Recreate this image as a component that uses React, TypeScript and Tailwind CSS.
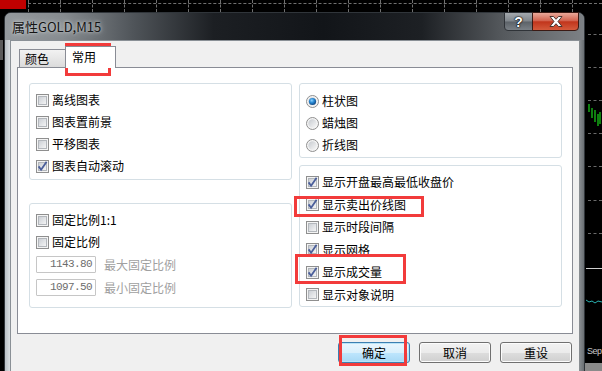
import React from 'react';

const Check = ({ on }: { on?: boolean }) => (
  <svg width="13" height="13" viewBox="0 0 13 13" className="shrink-0">
    <defs>
      <linearGradient id="cbg" x1="0" y1="0" x2="1" y2="1">
        <stop offset="0" stopColor="#c9cdd3" />
        <stop offset="1" stopColor="#f7f7f7" />
      </linearGradient>
    </defs>
    <rect x="0.5" y="0.5" width="12" height="12" fill="#f4f4f4" stroke="#8f8f8f" />
    <rect x="2.5" y="2.5" width="8" height="8" fill="url(#cbg)" stroke="#b3b7bc" />
    {on && <path d="M2.6 6.4 L5.1 9.8 L10.6 1.8" fill="none" stroke="#4a5e9a" strokeWidth="1.8" />}
  </svg>
);

const Radio = ({ on }: { on?: boolean }) => (
  <svg width="13" height="13" viewBox="0 0 13 13" className="shrink-0">
    <defs>
      <linearGradient id="rbg" x1="0" y1="0" x2="1" y2="1">
        <stop offset="0" stopColor="#c6cacf" />
        <stop offset="1" stopColor="#f8f8f8" />
      </linearGradient>
      <radialGradient id="rsel" cx="0.4" cy="0.35" r="0.7">
        <stop offset="0" stopColor="#8fd3ff" />
        <stop offset="0.45" stopColor="#2a8ad4" />
        <stop offset="1" stopColor="#0d3f7a" />
      </radialGradient>
    </defs>
    <circle cx="6.5" cy="6.5" r="6" fill="#f4f4f4" stroke="#8f8f8f" />
    <circle cx="6.5" cy="6.5" r="4.2" fill="url(#rbg)" />
    {on && <circle cx="6.5" cy="6.5" r="3.6" fill="url(#rsel)" />}
  </svg>
);

const Row = ({ label, on, radio, tall }: { label: string; on?: boolean; radio?: boolean; tall?: boolean }) => (
  <div className={tall ? 'flex items-center gap-[3px] h-[22.5px]' : 'flex items-center gap-[3px] h-[22px]'}>
    {radio ? <Radio on={on} /> : <Check on={on} />}
    <span className="text-[12px] leading-none text-black whitespace-nowrap">{label}</span>
  </div>
);

const Field = ({ value, label }: { value: string; label: string }) => (
  <div className="flex items-center h-[23px] gap-[8px]">
    <div className="w-[60px] h-[17px] border border-[#c6c6c6] rounded-[1px] bg-white flex items-center justify-end pr-[3px] text-[11px] tracking-[-0.6px] text-[#6d6d6d] [font-family:'Liberation_Mono',monospace]">
      {value}
    </div>
    <span className="text-[12px] leading-none text-[#a0a0a0] whitespace-nowrap">{label}</span>
  </div>
);

const Btn = ({ label, primary }: { label: string; primary?: boolean }) => (
  <div
    className={
      primary
        ? 'w-[72px] h-[21px] rounded-[3px] border border-[#3c7fb1] bg-[linear-gradient(180deg,#eaf6fd_0%,#d9f0fc_50%,#bee6fd_51%,#a7d9f5_100%)] flex items-center justify-center text-[12px] text-black shadow-[inset_0_0_0_1px_#b9e4f7]'
        : 'w-[72px] h-[21px] rounded-[3px] border border-[#707070] bg-[linear-gradient(180deg,#f2f2f2_0%,#ebebeb_50%,#dddddd_51%,#cfcfcf_100%)] flex items-center justify-center text-[12px] text-black shadow-[inset_0_0_0_1px_#fcfcfc]'
    }
  >
    {label}
  </div>
);

const RedBox = ({ cls }: { cls: string }) => <div className={'absolute border-[3px] border-[#f23b3b] ' + cls} />;

export default function App() {
  const ticks = Array.from({ length: 18 }, (_, i) => 28 + i * 32);
  const rightDashes = [34, 67, 100, 133, 166, 200, 233];

  return (
    <div className="relative w-[602px] h-[371px] overflow-hidden bg-black [font-family:'Noto_Sans_CJK_SC',sans-serif]">
      {/* chart behind the dialog */}
      <div className="absolute left-0 top-0 w-[26px] h-[9px] bg-[#c00000]" />
      <div className="absolute left-[28px] top-[3px] w-[574px] border-t border-dashed border-[#707070]" />
      {ticks.map((x) => (
        <div key={x} className="absolute top-0 h-[12px] border-l border-dashed border-[#707070]" style={{ left: x }} />
      ))}
      {rightDashes.map((y) => (
        <div key={y} className="absolute left-[588px] w-[14px] border-t border-dashed border-[#6a6a6a]" style={{ top: y }} />
      ))}
      <svg className="absolute left-[588px] top-[102px]" width="14" height="26" viewBox="0 0 14 26">
        <path d="M1 2 V10 M4 6 V16 M7 8 V20 M10 12 V24 M12 10 V22" stroke="#19d219" strokeWidth="1.2" />
      </svg>
      <div className="absolute left-[586px] top-[268px] w-[16px] border-t border-[#d0d0d0]" />
      <svg className="absolute left-[586px] top-[296px]" width="16" height="10" viewBox="0 0 16 10">
        <path d="M0 4 L3 6 L6 5 L9 7 L12 5 L16 6" stroke="#2bb3b3" fill="none" strokeWidth="1" />
      </svg>
      <div className="absolute left-[587px] top-[347px] text-[9px] tracking-[-0.5px] leading-none text-[#c8c8c8] [font-family:'Liberation_Sans',sans-serif]">Sep</div>
      <div className="absolute left-[585px] top-[363px] w-[17px] h-[8px] bg-[#8a8a8a]" />
      <div className="absolute left-0 top-[40px] w-[3px] h-[20px] bg-[#5a5a5a]" />

      {/* dialog window */}
      <div className="absolute left-[4px] top-[12px] w-[581px] h-[372px] rounded-t-[7px] border border-[#30353a] bg-[linear-gradient(180deg,#8b9094,#6c7175)] flex flex-col">
        <div className="relative h-[27px] shrink-0 rounded-t-[6px] bg-[linear-gradient(90deg,#94999d_0%,#868b8f_10%,#50555a_22%,#1c1f23_36%,#121519_55%,#1d2024_72%,#55595d_86%,#7d8185_100%)] flex items-center pl-[7px]">
          <span className="text-[13px] leading-none text-[#141414] [text-shadow:0_0_6px_#c9cdd0,0_0_3px_#c9cdd0]">属性GOLD,M15</span>
          <div className="absolute left-[499px] top-[-1px] w-[29px] h-[19px] rounded-bl-[4px] border border-[#2f3338] bg-[linear-gradient(180deg,#a3a8ad_0%,#7f858b_48%,#5c6268_52%,#7a8086_100%)] flex items-center justify-center">
            <span className="text-[14px] font-bold leading-none text-white [font-family:'Liberation_Sans',sans-serif] [text-shadow:0_0_1px_#000,0_0_1px_#000,0_0_2px_#000]">?</span>
          </div>
          <div className="absolute left-[527px] top-[-1px] w-[47px] h-[19px] rounded-br-[4px] border border-[#3b1a14] bg-[linear-gradient(180deg,#e9a899_0%,#d2634f_45%,#c1351c_52%,#d45a3c_100%)] flex items-center justify-center">
            <svg width="14" height="11" viewBox="0 0 14 11">
              <path d="M1 0.5 H4.5 L7 3.3 L9.5 0.5 H13 L9 5.5 L13 10.5 H9.5 L7 7.7 L4.5 10.5 H1 L5 5.5 Z" fill="#fff" stroke="#3a2a26" strokeWidth="0.9" />
            </svg>
          </div>
        </div>

        <div className="flex flex-1">
          <div className="w-[5px] bg-[linear-gradient(90deg,#b9c0c5,#d9dee1)]" />
          <div className="w-[569px] bg-[#f0f0f0] border-l border-t border-[#8a9096]">
            <div className="pt-[5px] px-[6px]">
              <div className="flex items-end h-[22px] pl-[2px] -mb-px">
                <div className="w-[47px] h-[19px] border border-[#898c95] bg-[linear-gradient(180deg,#f2f2f2,#dbdbdb)] flex items-center pl-[5px] text-[12px] leading-none text-black">
                  颜色
                </div>
                <div className="relative z-10 -ml-px w-[51px] h-[22px] border border-b-0 border-[#898c95] bg-white flex items-center pl-[6px] pb-[1px] text-[12px] leading-none text-black">
                  常用
                </div>
              </div>
              <div className="h-[267px] border border-[#898c95] bg-white pt-[15px] pl-[11px] flex gap-[7px]">
                <div className="w-[263px] flex flex-col">
                  <div className="h-[97px] border border-[#d5dfe5] rounded-[3px] pt-[5px] pl-[6px]">
                    <Row label="离线图表" />
                    <Row label="图表置前景" />
                    <Row label="平移图表" />
                    <Row label="图表自动滚动" on />
                  </div>
                  <div className="mt-[23px] h-[105px] border border-[#d5dfe5] rounded-[3px] pt-[5px] pl-[6px]">
                    <Row label="固定比例1:1" />
                    <Row label="固定比例" />
                    <Field value="1143.80" label="最大固定比例" />
                    <Field value="1097.50" label="最小固定比例" />
                  </div>
                </div>
                <div className="w-[263px] flex flex-col">
                  <div className="h-[75px] border border-[#d5dfe5] rounded-[3px] pt-[6px] pl-[6px]">
                    <Row label="柱状图" radio on />
                    <Row label="蜡烛图" radio />
                    <Row label="折线图" radio />
                  </div>
                  <div className="mt-[7px] h-[142px] border border-[#d5dfe5] rounded-[3px] pt-[5px] pl-[6px]">
                    <Row label="显示开盘最高最低收盘价" on tall />
                    <Row label="显示卖出价线图" on tall />
                    <Row label="显示时段间隔" tall />
                    <Row label="显示网格" on tall />
                    <Row label="显示成交量" on tall />
                    <Row label="显示对象说明" tall />
                  </div>
                </div>
              </div>
              <div className="mt-[8px] flex justify-end gap-[9px] pr-[1px]">
                <Btn label="确定" primary />
                <Btn label="取消" />
                <Btn label="重设" />
              </div>
            </div>
          </div>
          <div className="w-[5px] bg-[linear-gradient(90deg,#8c9195,#6a6f73)]" />
        </div>
      </div>

      {/* annotation boxes */}
      <RedBox cls="left-[65px] top-[43px] w-[46px] h-[33px]" />
      <RedBox cls="left-[294px] top-[196px] w-[130px] h-[21px]" />
      <RedBox cls="left-[295px] top-[254px] w-[111px] h-[30px]" />
      <RedBox cls="left-[339px] top-[335px] w-[68px] h-[31px]" />
    </div>
  );
}
